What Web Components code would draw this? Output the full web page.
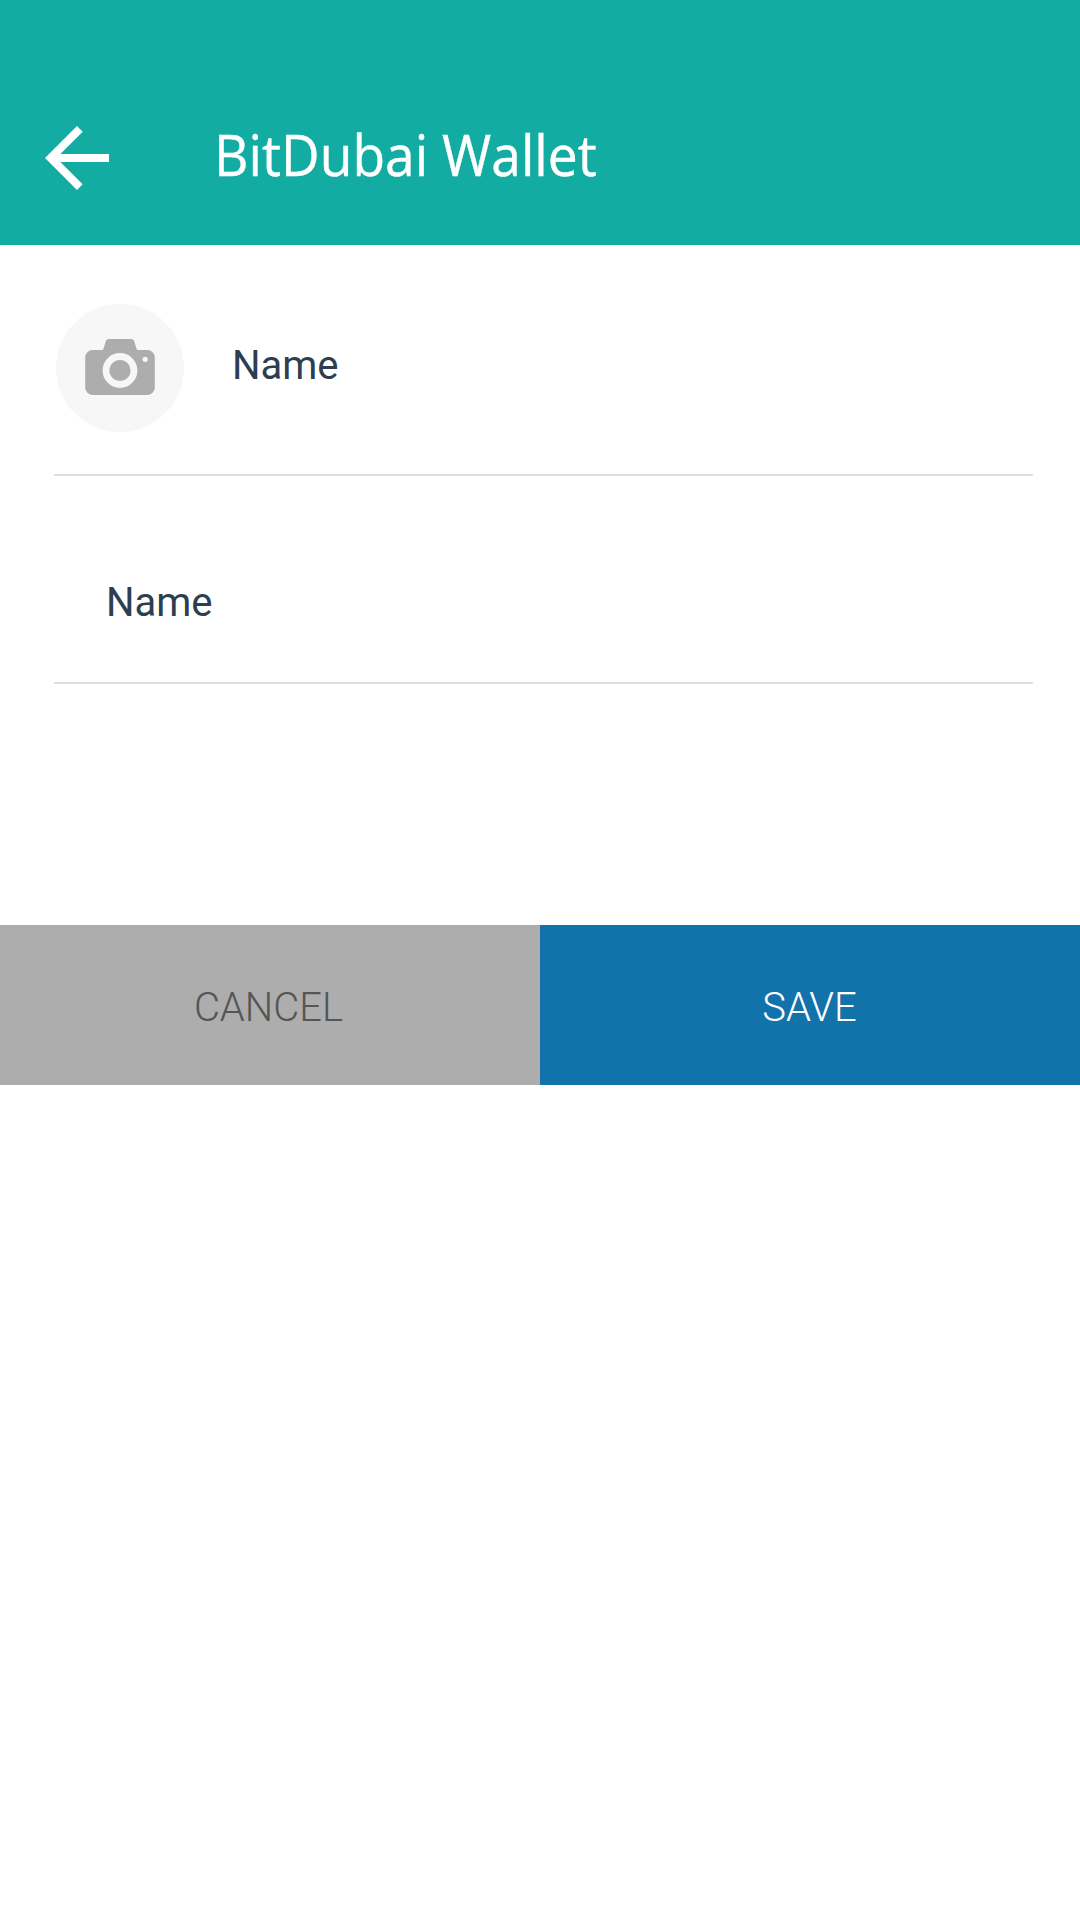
<!DOCTYPE html>
<html lang="en">
<head>
<meta charset="utf-8">
<title>BitDubai Wallet</title>
<style>
html,body{margin:0;background:#fff}
body{font-family:Roboto,sans-serif;color:#2c3e50}
</style>
</head>
<body>
<wallet-screen></wallet-screen>
<script>
function define(name, html) {
  customElements.define(name, class extends HTMLElement {
    constructor() {
      super();
      this.attachShadow({ mode: "open" }).innerHTML = html;
    }
  });
}

define("app-bar", `
<style>
:host{display:flex;box-sizing:border-box;height:245px;padding:110px 0 0 29px;background:#13aca2;color:#fff}
svg{width:96px;height:96px;flex:none;display:block}
h1{margin:4px 0 0 89px;font:400 57px/80px "Open Sans","Noto Sans",sans-serif;white-space:nowrap;transform:scaleX(.936);transform-origin:0 0;-webkit-text-stroke:.4px #fff}
</style>
<svg viewBox="0 0 24 24" fill="currentColor"><path d="M20 11H7.830l5.590-5.590L12 4l-8 8 8 8 1.410-1.410L7.830 13H20z"/></svg>
<h1><slot></slot></h1>`);

define("photo-button", `
<style>
:host{display:flex;flex:none;width:128px;height:128px;border-radius:50%;background:#f7f7f8}
svg{width:128px;height:128px;display:block}
</style>
<svg viewBox="0 0 128 128">
<path fill="#adadad" d="M36.500 46H45c1.500 0 2.300-.5 2.700-1.800l2-6.700c.5-1.500 1.300-2.500 2.800-2.500h23c1.500 0 2.300 1 2.800 2.500l2 6.700c.4 1.300 1.200 1.800 2.700 1.800H91.300a7.500 7.500 0 0 1 7.500 7.500v30A7.500 7.500 0 0 1 91.300 91H36.700a7.500 7.500 0 0 1-7.500-7.500v-30A7.500 7.500 0 0 1 36.500 46z"/>
<circle cx="64" cy="66.500" r="14" fill="none" stroke="#f7f7f8" stroke-width="6.800"/>
<circle cx="89.200" cy="55.300" r="2.600" fill="#f7f7f8"/>
</svg>`);

define("form-row", `
<style>
:host{display:flex;box-sizing:border-box;margin:0 47px 0 54px;border-bottom:2px solid #e0e0e0;font-size:40px;line-height:48px}
</style>
<slot></slot>`);

define("action-button", `
<style>
:host{display:flex;flex:none;width:50%;box-sizing:border-box;justify-content:center;height:160px;padding:59px 3px 0 0;background:#adadad;color:#555}
:host([primary]){padding-right:1px;background:#1273ab;color:#fff}
button{all:unset;font:300 40px/48px Roboto,sans-serif;color:inherit;height:48px}
</style>
<button><slot></slot></button>`);

define("wallet-screen", `
<style>
:host{display:block;min-height:1920px;background:#fff}
.photo{height:231px;padding:59px 0 0 2px;gap:48px}
.photo span{margin-top:38px}
.name{height:208px;padding:103px 0 0 52px}
.actions{display:flex;margin-top:241px}
</style>
<app-bar>BitDubai Wallet</app-bar>
<form-row class="photo"><photo-button></photo-button><span>Name</span></form-row>
<form-row class="name"><span>Name</span></form-row>
<div class="actions"><action-button>CANCEL</action-button><action-button primary>SAVE</action-button></div>`);
</script>
</body>
</html>
